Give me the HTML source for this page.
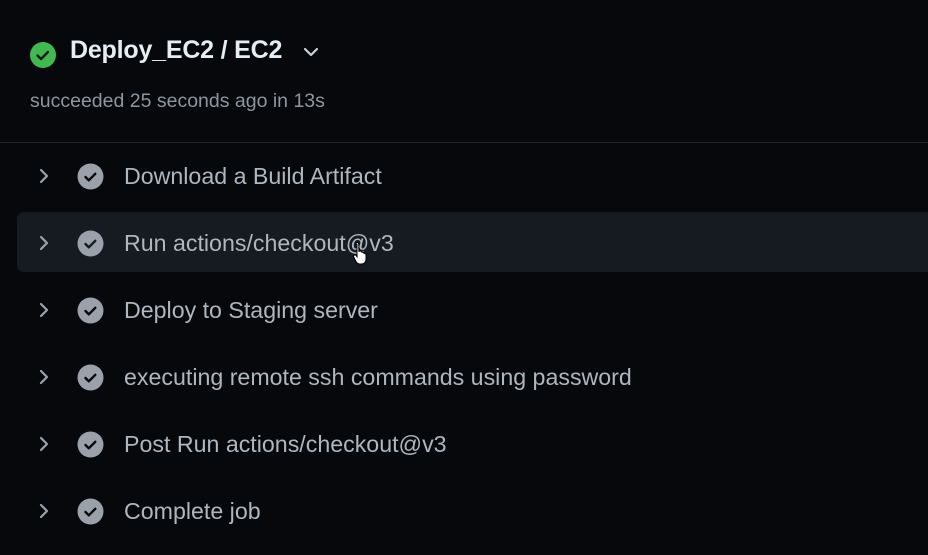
<!DOCTYPE html>
<html><head><style>
body{margin:0;width:928px;height:555px;background:#07080b;font-family:"Liberation Sans",sans-serif;overflow:hidden;position:relative}
.a{position:absolute}
.title{left:70px;top:36px;font-size:25px;font-weight:bold;color:#e6edf3;letter-spacing:-0.2px}
.sub{left:30px;top:90px;font-size:19.5px;color:#8d96a0}
.line{left:0;top:142px;width:928px;height:1px;background:#21262d}
.hl{left:17px;top:212px;width:930px;height:60px;background:#161b22;border-radius:7px}
.row{position:absolute;left:0;width:928px;height:40px}
.row svg{position:absolute}
.row span{position:absolute;left:124px;top:7px;font-size:23.2px;color:#aeb6bf}
</style></head><body>
<svg class="a" style="left:29px;top:41px" width="28" height="28" viewBox="0 0 28 28"><circle cx="14" cy="14" r="13" fill="#3fb950"/><path d="M8.5 14.5l3.5 3.5 7-7" stroke="#0b1a0e" stroke-width="2.4" fill="none" stroke-linecap="round" stroke-linejoin="round"/></svg>
<div class="a title">Deploy_EC2 / EC2</div>
<svg class="a" style="left:302px;top:45px" width="18" height="14" viewBox="0 0 18 14"><path d="M3 4l6 6 6-6" stroke="#c9d1d9" stroke-width="2.2" fill="none" stroke-linecap="round" stroke-linejoin="round"/></svg>
<div class="a sub">succeeded 25 seconds ago in 13s</div>
<div class="a line"></div>
<div class="a hl"></div>

<div class="row" style="top:156px"><svg style="left:36px;top:11px" width="16" height="18" viewBox="0 0 16 18"><path d="M5 3l6 6-6 6" stroke="#9aa2ab" stroke-width="2.2" fill="none" stroke-linecap="round" stroke-linejoin="round"/></svg><svg style="left:77px;top:7px" width="27" height="27" viewBox="0 0 27 27"><circle cx="13.5" cy="13.5" r="13" fill="#9aa1aa"/><path d="M8.5 14l3.3 3.3 6.5-6.5" stroke="#07080b" stroke-width="2.4" fill="none" stroke-linecap="round" stroke-linejoin="round"/></svg><span>Download a Build Artifact</span></div>
<div class="row" style="top:223px"><svg style="left:36px;top:11px" width="16" height="18" viewBox="0 0 16 18"><path d="M5 3l6 6-6 6" stroke="#9aa2ab" stroke-width="2.2" fill="none" stroke-linecap="round" stroke-linejoin="round"/></svg><svg style="left:77px;top:7px" width="27" height="27" viewBox="0 0 27 27"><circle cx="13.5" cy="13.5" r="13" fill="#9aa1aa"/><path d="M8.5 14l3.3 3.3 6.5-6.5" stroke="#161b22" stroke-width="2.4" fill="none" stroke-linecap="round" stroke-linejoin="round"/></svg><span>Run actions/checkout@v3</span></div>
<div class="row" style="top:290px"><svg style="left:36px;top:11px" width="16" height="18" viewBox="0 0 16 18"><path d="M5 3l6 6-6 6" stroke="#9aa2ab" stroke-width="2.2" fill="none" stroke-linecap="round" stroke-linejoin="round"/></svg><svg style="left:77px;top:7px" width="27" height="27" viewBox="0 0 27 27"><circle cx="13.5" cy="13.5" r="13" fill="#9aa1aa"/><path d="M8.5 14l3.3 3.3 6.5-6.5" stroke="#07080b" stroke-width="2.4" fill="none" stroke-linecap="round" stroke-linejoin="round"/></svg><span>Deploy to Staging server</span></div>
<div class="row" style="top:357px"><svg style="left:36px;top:11px" width="16" height="18" viewBox="0 0 16 18"><path d="M5 3l6 6-6 6" stroke="#9aa2ab" stroke-width="2.2" fill="none" stroke-linecap="round" stroke-linejoin="round"/></svg><svg style="left:77px;top:7px" width="27" height="27" viewBox="0 0 27 27"><circle cx="13.5" cy="13.5" r="13" fill="#9aa1aa"/><path d="M8.5 14l3.3 3.3 6.5-6.5" stroke="#07080b" stroke-width="2.4" fill="none" stroke-linecap="round" stroke-linejoin="round"/></svg><span>executing remote ssh commands using password</span></div>
<div class="row" style="top:424px"><svg style="left:36px;top:11px" width="16" height="18" viewBox="0 0 16 18"><path d="M5 3l6 6-6 6" stroke="#9aa2ab" stroke-width="2.2" fill="none" stroke-linecap="round" stroke-linejoin="round"/></svg><svg style="left:77px;top:7px" width="27" height="27" viewBox="0 0 27 27"><circle cx="13.5" cy="13.5" r="13" fill="#9aa1aa"/><path d="M8.5 14l3.3 3.3 6.5-6.5" stroke="#07080b" stroke-width="2.4" fill="none" stroke-linecap="round" stroke-linejoin="round"/></svg><span>Post Run actions/checkout@v3</span></div>
<div class="row" style="top:491px"><svg style="left:36px;top:11px" width="16" height="18" viewBox="0 0 16 18"><path d="M5 3l6 6-6 6" stroke="#9aa2ab" stroke-width="2.2" fill="none" stroke-linecap="round" stroke-linejoin="round"/></svg><svg style="left:77px;top:7px" width="27" height="27" viewBox="0 0 27 27"><circle cx="13.5" cy="13.5" r="13" fill="#9aa1aa"/><path d="M8.5 14l3.3 3.3 6.5-6.5" stroke="#07080b" stroke-width="2.4" fill="none" stroke-linecap="round" stroke-linejoin="round"/></svg><span>Complete job</span></div>

<svg class="a" style="left:352px;top:240px" width="18" height="26" viewBox="0 0 18 26"><path d="M5 2.5c1 0 1.8.8 1.8 1.8v7l1.5-.3c.8 0 1.5.5 1.6 1.2l.5-.1c.8 0 1.5.6 1.6 1.3h.4c.9 0 1.6.7 1.6 1.6v4.5c0 2.5-2 4.5-4.5 4.5H8c-1.8 0-3.2-1-4-2.5L1.7 17c-.4-.8 0-1.7.8-2 .6-.2 1.2 0 1.6.5l.9 1.2V4.3C3.2 3.3 4 2.5 5 2.5z" fill="#fff" stroke="#000" stroke-width="1"/></svg>
</body></html>
